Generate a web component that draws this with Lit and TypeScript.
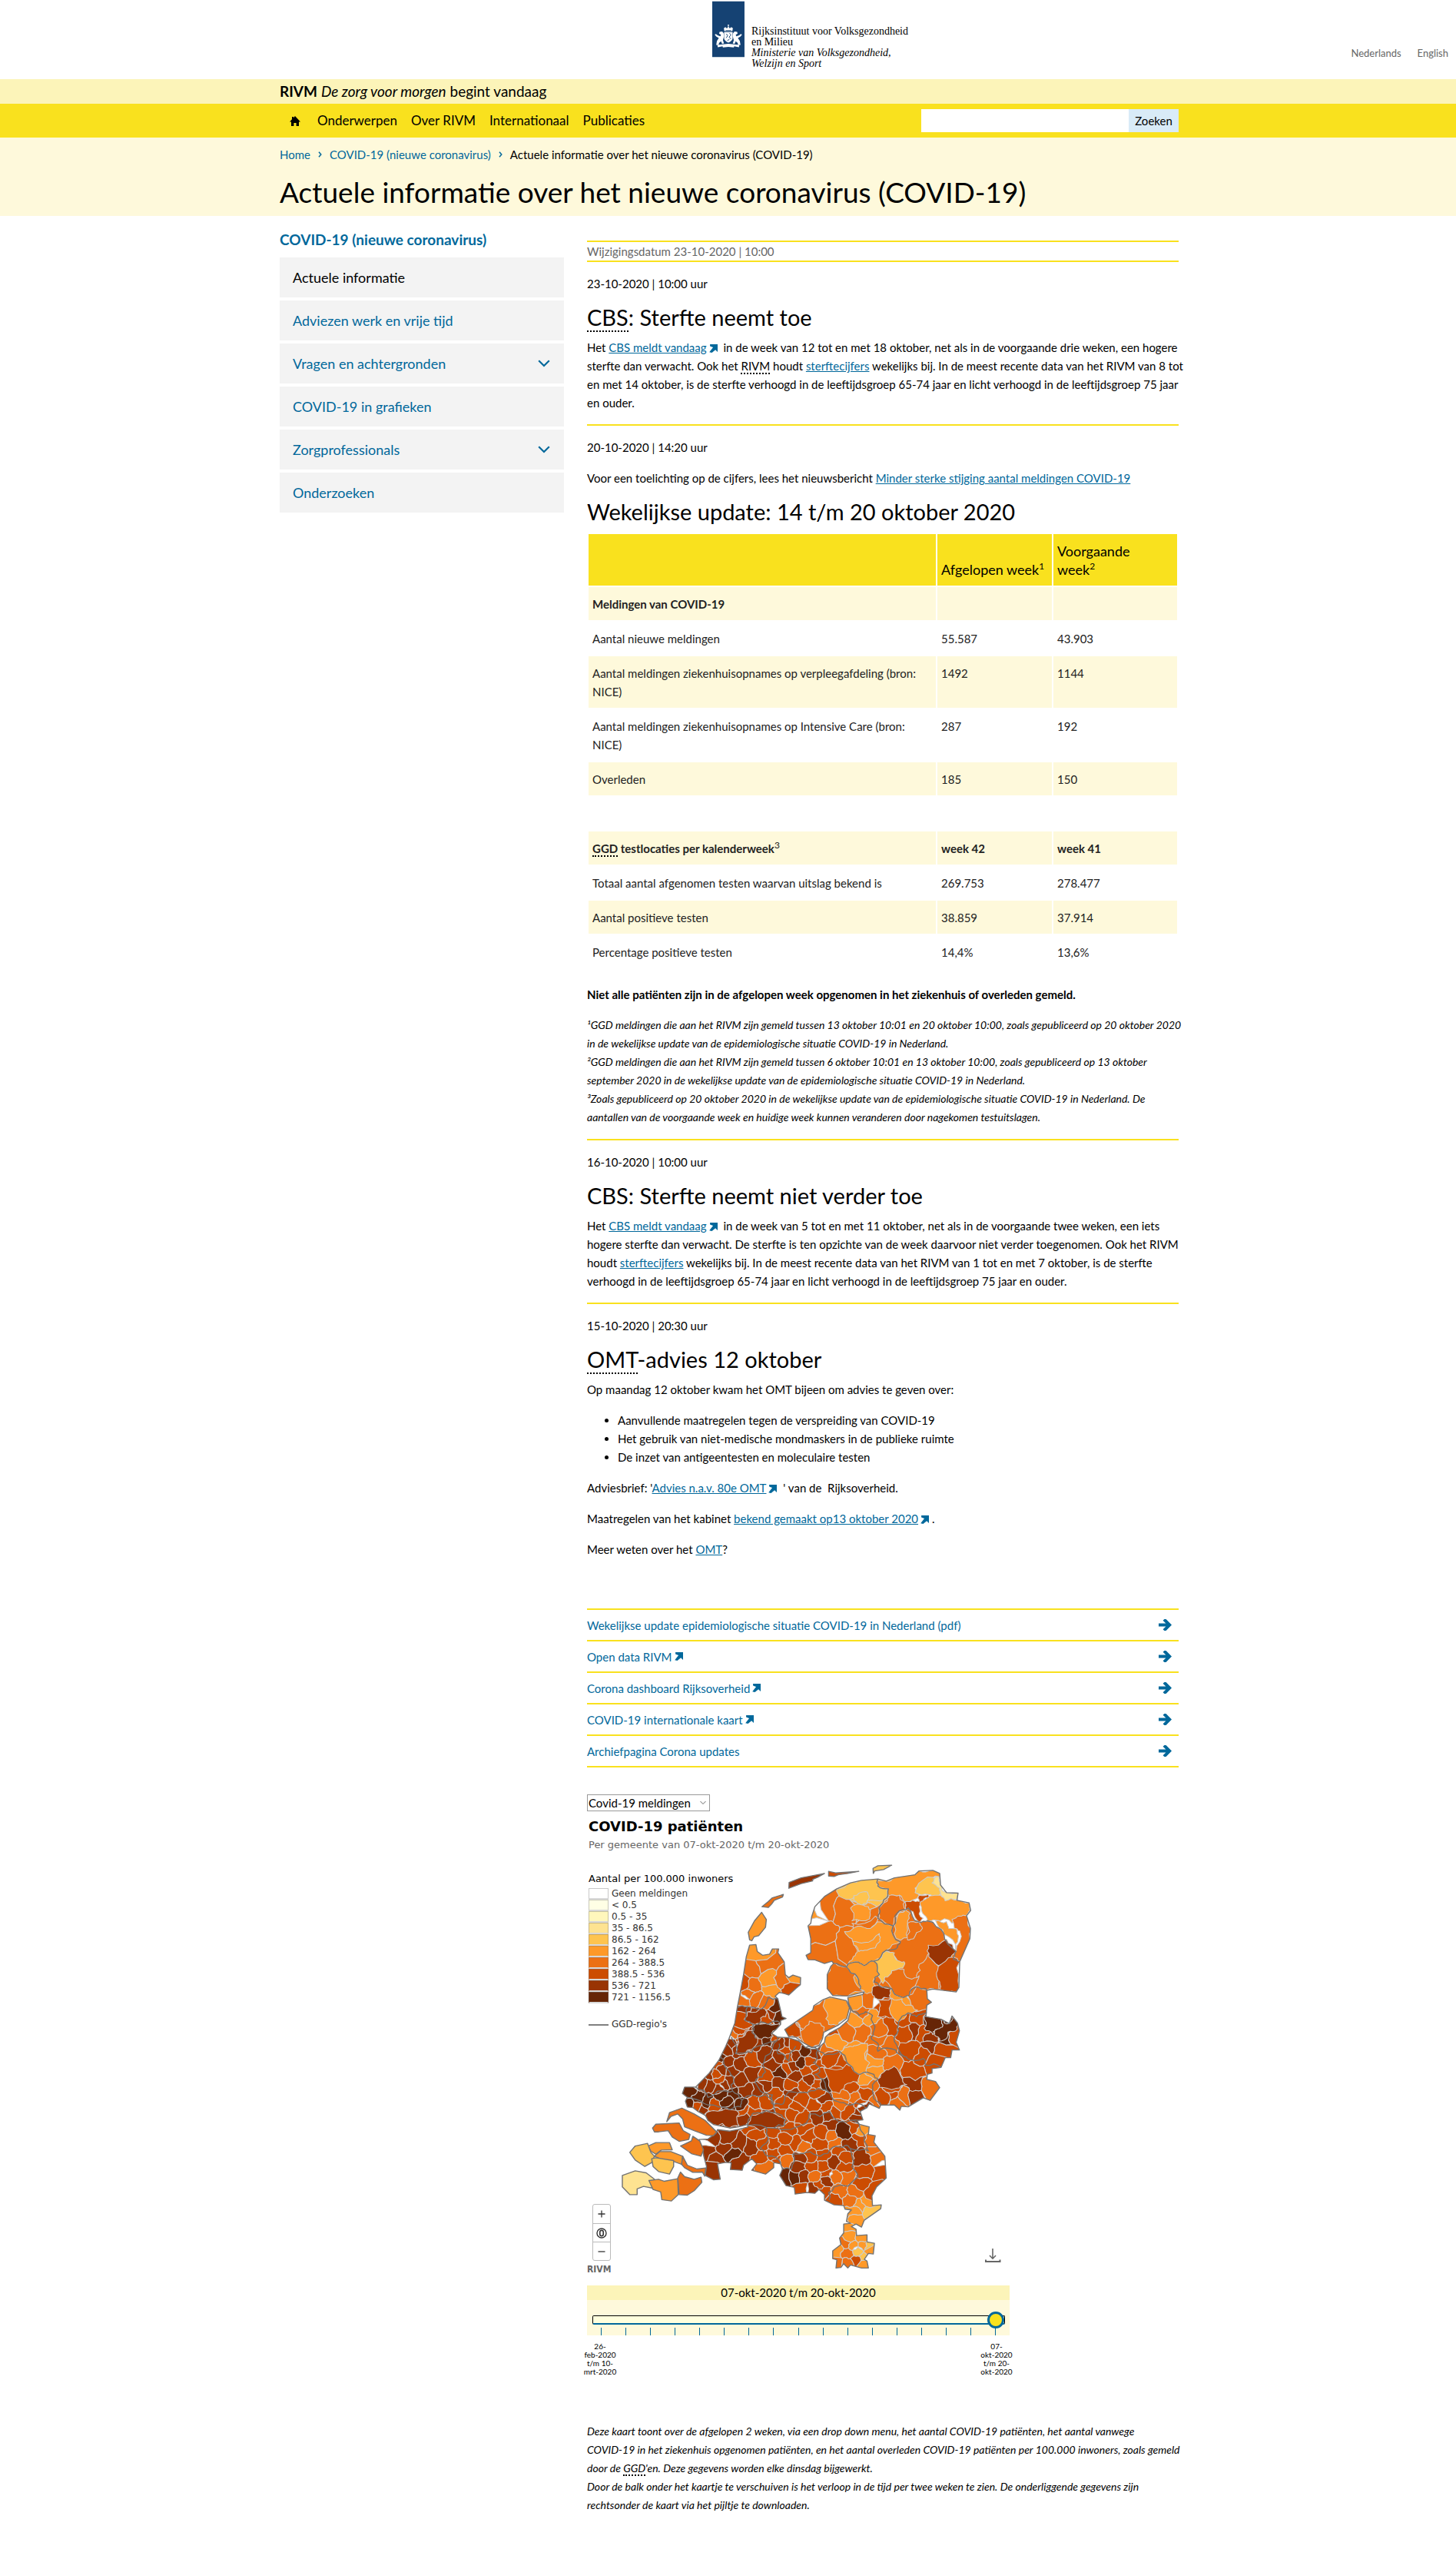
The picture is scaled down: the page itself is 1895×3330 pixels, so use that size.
import { LitElement, html, svg, css } from "lit";
import { customElement, state } from "lit/decorators.js";

type Pt = [number, number];

/* ---------- choropleth data ---------- */

const CLASS_COLORS: Record<string, string> = {
  z: "#ffffff",
  a: "#ffffe5",
  b: "#fff7bc",
  c: "#fee391",
  d: "#fec44f",
  e: "#fe9929",
  f: "#ec7014",
  g: "#cc4c02",
  h: "#993404",
  i: "#662506",
};

const LEGEND: [string, string][] = [
  ["z", "Geen meldingen"],
  ["a", "< 0.5"],
  ["b", "0.5 - 35"],
  ["c", "35 - 86.5"],
  ["d", "86.5 - 162"],
  ["e", "162 - 264"],
  ["f", "264 - 388.5"],
  ["g", "388.5 - 536"],
  ["h", "536 - 721"],
  ["i", "721 - 1156.5"],
];

const MAINLAND =
  "1100,367 1040,372 1000,382 950,405 905,435 870,475 858,515 855,540 845,550 850,575 855,600 855,655 838,665 845,682 870,683 905,697 932,688 938,697 928,708 915,740 915,795 935,822 990,824 1050,808 1045,818 990,830 992,845 1000,880 990,920 960,948 925,968 908,985 905,1005 880,1030 858,1032 835,1025 812,1000 770,986 735,985 712,970 728,955 745,935 745,920 765,912 750,905 745,880 735,835 725,825 740,810 760,815 775,820 800,795 817,780 818,752 790,742 775,752 762,740 758,690 735,655 738,640 715,640 705,660 680,665 660,650 655,623 632,625 620,670 610,740 598,810 587,870 578,930 557,990 545,1020 520,1075 485,1125 435,1180 395,1180 387,1205 405,1220 398,1235 405,1258 425,1260 445,1276 470,1290 480,1310 500,1326 560,1340 592,1335 625,1326 625,1336 592,1345 560,1352 515,1346 510,1360 480,1383 448,1385 460,1420 465,1450 475,1490 470,1525 500,1542 525,1540 515,1480 545,1474 565,1476 562,1502 605,1505 610,1485 640,1460 658,1480 640,1505 690,1520 720,1495 720,1475 745,1480 752,1500 742,1525 765,1565 795,1572 798,1598 840,1592 870,1595 885,1580 905,1600 905,1622 940,1640 975,1643 980,1657 1003,1660 990,1675 985,1705 1000,1712 975,1715 975,1750 960,1770 965,1795 935,1820 935,1850 950,1855 947,1887 965,1885 975,1870 990,1887 1000,1875 1040,1887 1065,1887 1060,1860 1050,1853 1065,1830 1083,1832 1087,1790 1060,1785 1060,1757 1022,1760 1020,1735 1003,1725 1020,1715 1040,1727 1050,1700 1110,1655 1112,1640 1080,1643 1078,1605 1095,1570 1130,1535 1125,1450 1085,1395 1090,1370 1065,1365 1068,1335 1030,1325 1025,1310 1045,1308 1035,1275 1060,1260 1068,1245 1105,1263 1110,1250 1160,1250 1180,1270 1185,1255 1210,1257 1265,1222 1290,1232 1325,1182 1310,1158 1278,1150 1280,1130 1297,1125 1297,1108 1330,1103 1345,1065 1365,1065 1370,1035 1397,1035 1385,1005 1397,960 1390,930 1370,902 1360,932 1330,915 1275,905 1278,860 1295,848 1280,835 1278,802 1300,797 1385,808 1395,790 1398,690 1435,600 1437,560 1423,510 1438,490 1432,460 1388,450 1392,422 1350,420 1328,390 1325,345 1300,333 1250,335 1235,350 1160,362 1130,375";

const FLEVOLAND =
  "925,828 985,842 996,870 986,912 955,938 902,966 898,990 886,1018 860,1026 830,1008 800,985 775,983 760,955 800,925 862,880 866,862 900,838";

/* Centres of the municipalities, grouped by class. */
const CENTRES: Record<string, string> = {
  d: "1040,440 1075,1665 1025,1820 1065,1805 1050,1845",
  e: "640,650 705,765 710,800 805,765 868,500 1030,480 1020,850 1185,870 1070,910 1020,920 1020,1050 1085,1080 1090,1120 940,1000 1055,1150 1045,1350 1060,1620 1030,1640 1010,1670 1020,1705 990,1730 1040,1770 1010,1800 955,1820 1045,1800 1070,1820 1045,1875 1000,1770",
  f: "690,700 635,720 640,790 755,765 610,840 655,835 690,850 630,815 572,970 920,470 900,590 920,650 985,490 1080,540 990,620 1060,840 1240,840 1040,890 985,955 1040,960 1100,950 1100,1000 1100,1040 1130,1020 910,1030 1150,1090 1065,1170 1290,1190 1195,1215 970,1210 1020,1220 1090,1240 1170,1240 965,1250 825,1415 930,1370 945,1400 765,1465 690,1490 1070,1380 1090,1420 870,1530 945,1530 980,1530 1105,1460 960,1590 1020,1590 1000,1625 985,1790 990,1830 960,1875 990,1870",
  g: "608,780 780,795 605,920 695,910 595,955 605,990 1120,870 1150,940 1195,920 1245,915 1380,970 1200,960 1265,965 1220,1040 1330,1030 1260,1060 1300,1085 930,960 930,1070 970,1090 960,1120 1230,1110 1150,1205 1120,1220 1050,1210 1000,1180 1040,1240 1150,1190 990,1270 910,1260 940,1280 720,990 800,1020 760,1040 775,1065 770,1110 850,1080 870,1100 840,1115 830,1170 785,1170 720,1210 690,1145 880,1165 880,1130 515,1090 510,1130 640,1070 520,1150 440,1255 650,1240 690,1230 610,1265 640,1275 500,1250 760,1240 820,1230 880,1200 790,1280 830,1300 750,1290 800,1260 870,1250 650,1340 660,1370 680,1400 675,1450 720,1350 770,1350 830,1340 720,1400 760,1380 760,1430 800,1400 720,1440 850,1370 890,1400 900,1360 1010,1330 740,1470 965,1430 1040,1380 850,1450 900,1450 860,1490 900,1490 910,1520 830,1580 885,1560 900,1590 1050,1510 980,1450 970,1490 1110,1520 1040,1560 940,1620 1075,1590 1020,1860",
  h: "660,900 600,870 715,900 630,985 1230,955 1300,990 1300,1015 1140,1150 1235,1170 1235,1215 1050,1255 1030,1290 900,1225 610,1010 560,1010 590,1040 650,1010 690,1050 740,1010 770,1000 745,1060 860,1050 800,1060 790,1100 720,1090 850,1150 800,1140 690,1170 740,1165 870,1020 545,1040 485,1130 530,1110 550,1080 600,1090 570,1120 640,1130 600,1150 620,1190 660,1190 460,1165 490,1170 540,1170 560,1160 520,1185 455,1265 540,1290 490,1300 620,1300 700,1300 880,1290 920,1290 790,1200 1025,1300 490,1390 550,1375 590,1400 640,1410 480,1425 500,1460 540,1420 600,1470 495,1515 930,1330 990,1410 815,1460 810,1490 830,1530 865,1575 940,1475 910,1545 1040,1455",
  i: "728,870 690,960 740,900 1295,925 1345,950 1340,985 700,990 835,1040 820,1082 745,1120 905,1165 530,1065 410,1200 440,1225 480,1240 530,1210 550,1235 575,1210 410,1245 560,1255 600,1250 570,1445 970,1355 765,1530 795,1530",
};

/* Larger municipalities with their own outline: class, points. */
const AREAS: [string, string][] = [
  ["d", "950,407 1000,382 1040,372 1100,367 1100,395 1138,405 1125,445 1060,450 1058,465 1030,468 1012,440 960,435"],
  ["d", "1012,432 1035,420 1062,418 1066,430 1060,462 1040,468 1025,462"],
  ["e", "1000,480 1040,468 1065,475 1072,505 1070,522 1005,530 1012,500"],
  ["f", "1005,540 1090,512 1100,525 1085,548 1060,560 1010,558"],
  ["e", "978,572 1015,556 1060,560 1098,534 1155,550 1165,580 1182,612 1165,640 1130,645 1085,688 1050,705 1030,692 985,710 1010,670 1025,645 1005,600"],
  ["e", "1010,610 1050,615 1105,580 1108,610 1060,645 1030,650 1012,625"],
  ["e", "1098,372 1130,375 1160,362 1235,350 1250,335 1300,333 1325,345 1325,358 1270,378 1235,402 1238,422 1250,430 1198,455 1178,430 1140,432 1138,405 1104,398"],
  ["d", "1300,360 1240,400 1235,420 1285,428 1310,435 1328,425 1328,395"],
  ["c", "1310,358 1325,360 1328,390 1350,420 1392,422 1388,446 1345,452 1330,430 1325,402 1297,382"],
  ["e", "1252,452 1328,430 1345,452 1388,450 1432,460 1436,490 1423,510 1400,512 1370,540 1310,528 1280,530 1262,500"],
  ["g", "1252,430 1282,427 1284,440 1256,455 1252,480 1265,520 1250,535 1228,495 1200,482 1198,458 1225,450 1250,455"],
  ["f", "1140,432 1178,430 1196,458 1200,484 1178,495 1155,550 1102,522 1103,480 1132,455"],
  ["f", "1155,550 1175,500 1210,480 1250,535 1280,530 1340,580 1385,650 1398,690 1300,797 1240,785 1215,820 1170,822 1150,795 1105,782 1115,760 1130,745 1195,700 1130,645 1182,612"],
  ["e", "1160,548 1175,500 1200,484 1216,500 1208,540 1208,595 1182,606"],
  ["f", "1208,540 1250,535 1262,560 1230,600 1208,605"],
  ["f", "1250,700 1290,650 1320,708 1322,797 1280,800 1235,785 1240,745"],
  ["f", "1120,760 1150,725 1195,720 1215,755 1250,745 1235,785 1215,820 1170,822 1150,795"],
  ["f", "1423,510 1437,560 1435,600 1398,690 1378,672 1385,650 1398,570 1378,558 1370,525 1400,512"],
  ["e", "1310,530 1350,533 1358,560 1385,560 1392,600 1382,645 1340,582"],
  ["h", "1283,625 1350,602 1385,650 1320,705 1285,670"],
  ["g", "1320,708 1375,672 1398,690 1395,790 1385,808 1325,797 1318,760"],
  ["d", "1085,688 1130,648 1160,655 1165,680 1195,690 1190,715 1150,725 1125,750 1118,775 1100,745"],
  ["f", "930,705 945,697 985,710 1020,735 1035,795 1050,808 990,824 935,822 915,795 915,740"],
  ["e", "985,710 1030,692 1050,705 1085,688 1105,740 1085,775 1088,795 1060,815 1035,800 1025,750"],
  ["h", "1085,785 1105,782 1150,795 1145,832 1100,838 1080,820"],
  ["g", "1098,838 1150,832 1155,910 1098,905 1105,870"],
  ["e", "1150,832 1188,835 1200,860 1245,880 1205,892 1175,925 1156,910"],
  ["i", "1268,905 1330,915 1335,945 1310,955 1300,975 1268,950"],
  ["i", "1330,915 1360,932 1370,902 1392,935 1388,955 1355,965 1350,990 1325,1000 1305,975 1312,955 1335,945"],
  ["e", "1018,1018 1062,1010 1070,1085 1060,1125 1035,1130 1010,1115 985,1080 960,1045 1000,1020"],
  ["g", "902,1105 985,1090 1010,1115 1035,1130 1030,1160 990,1165 960,1205 920,1175"],
  ["h", "1098,1150 1130,1112 1158,1098 1190,1150 1205,1170 1165,1185 1105,1180"],
  ["h", "470,1290 500,1272 560,1268 594,1285 594,1332 560,1340 500,1326"],
  ["h", "625,1330 640,1290 690,1275 740,1295 762,1305 755,1335 720,1338"],
  ["h", "585,1050 588,990 605,985 625,960 650,962 662,990 625,1035 605,1052"],
  ["i", "640,950 650,938 700,935 745,928 740,945 712,970 718,982 690,985 665,990"],
  ["h", "612,915 625,885 680,868 695,885 690,905 672,910 670,935 650,935"],
];

const FLEVO_AREAS: [string, string][] = [
  ["f", FLEVOLAND],
  ["e", "908,833 985,842 996,870 986,912 955,938 920,935 915,890"],
  ["g", "760,955 798,923 832,962 818,982 800,985 775,983"],
  ["f", "798,923 820,960 850,922 890,930 905,966 898,990 860,1026 830,1008"],
];

/* Wadden islands and the Zeeland delta. */
const ISLANDS: [string, string][] = [
  ["e", "632,605 627,575 650,530 676,497 693,525 690,555 665,588 648,593 640,608"],
  ["f", "677,475 700,455 715,440 755,427 752,437 722,450 712,465 700,478"],
  ["h", "775,403 776,380 820,362 905,345 880,360 862,368 862,374 820,385"],
  ["g", "920,337 945,343 1030,337 990,345 955,350 940,357 920,355"],
  ["d", "1083,345 1082,325 1100,315 1150,313 1120,330 1088,335"],
  ["f", "340,1280 385,1262 430,1285 470,1310 512,1355 500,1370 475,1368 430,1350 395,1335 388,1305 370,1285 345,1295 330,1315"],
  ["f", "278,1340 290,1325 375,1320 390,1350 415,1365 410,1385 375,1392 350,1375 335,1350 300,1355 285,1355"],
  ["f", "380,1410 420,1390 425,1372 450,1390 464,1425 455,1450 420,1440"],
  ["e", "262,1410 290,1397 340,1397 350,1425 310,1426 290,1442 272,1430"],
  ["d", "195,1435 215,1410 260,1400 272,1435 285,1450 275,1475 250,1490 215,1465"],
  ["e", "285,1450 305,1432 345,1432 388,1450 384,1482 355,1470 318,1465"],
  ["d", "275,1460 290,1456 355,1467 355,1490 340,1520 300,1510 280,1490"],
  ["f", "388,1450 405,1485 440,1500 472,1496 468,1528 460,1512 425,1513 395,1495 384,1482"],
  ["c", "168,1525 215,1507 255,1515 285,1540 280,1575 245,1568 222,1578 222,1600 195,1600 168,1570"],
  ["e", "265,1545 300,1540 320,1548 370,1538 372,1600 347,1625 312,1620 308,1590 280,1580"],
  ["f", "370,1535 380,1512 395,1530 430,1540 455,1532 458,1552 430,1585 405,1602 375,1600"],
];

/* Borders of the GGD regions. */
const REGIONS: string[] = [
  "1100,367 1100,395 1138,405 1132,440 1103,480 1100,520 1155,550 1170,500 1210,480 1250,535 1280,530 1340,580 1385,650 1375,680 1398,690",
  "1155,550 1182,612 1165,640 1130,645 1085,688 1050,705 1030,692 985,710 938,697",
  "1085,688 1105,740 1085,770 1105,785 1150,795 1170,822 1215,820 1240,788 1275,795 1280,805",
  "985,710 1025,750 1035,800",
  "992,845 1005,880 1030,900 1055,885 1080,900 1085,960 1075,985 1100,1010 1100,1040 1165,1035 1195,1060 1210,1070 1265,1068 1275,1095 1330,1103",
  "1278,890 1240,905 1210,890 1175,925 1175,960 1160,985 1165,1010 1195,1060",
  "880,1030 905,1055 960,1040 985,1080 1010,1115 1035,1130 1085,1130 1100,1150 1080,1200 1090,1230 1110,1252",
  "835,1025 880,1035 865,1085 885,1100 888,1120 870,1130 900,1150 925,1205 880,1185 830,1200 775,1198 755,1245 720,1250 715,1210 695,1205 660,1175 655,1150 690,1120 685,1080 720,1010 735,985",
  "925,1205 950,1235 1000,1250 1040,1248 1060,1260",
  "565,985 580,1050 640,1045 690,1010 725,1000",
  "525,1062 550,1110 575,1150 570,1195 605,1230 690,1210 720,1250 725,1280",
  "435,1180 480,1220 530,1195 570,1195",
  "605,1230 600,1258 560,1268 480,1250 425,1225 405,1220",
  "725,1280 660,1280 640,1290 625,1326",
  "625,1330 720,1340 760,1330 765,1310 725,1280",
  "720,1340 840,1320 850,1285 925,1277 975,1315 1010,1310 1025,1310",
  "690,1335 695,1365 670,1420 700,1450 745,1475 742,1480",
  "785,1500 790,1440 840,1435 890,1450 935,1415 980,1408 1000,1420 1065,1430 1050,1390 1010,1310",
  "1000,1420 1005,1490 1027,1530 940,1570 922,1622",
  "785,1500 750,1500",
  "587,870 625,865 660,875 700,830 735,835",
  "625,865 615,920 645,935 700,935 745,930",
  "645,935 640,965 655,990",
  "740,1010 735,1050 775,1078 800,1020",
];

/* ---------- geometry ---------- */

const parse = (s: string): Pt[] => s.split(" ").map((p) => p.split(",").map(Number) as Pt);

/** Repeatable pseudo-random value between -0.5 and 0.5 for an edge. */
const noise = (a: Pt, b: Pt, salt: number) => {
  const v = Math.sin((a[0] + b[0]) * 12.9898 + (a[1] + b[1]) * 78.233 + salt) * 43758.5453;
  return v - Math.floor(v) - 0.5;
};

/** Bends a straight border; both neighbours get the same bend. */
function bend(a: Pt, b: Pt, depth: number): Pt[] {
  const len = Math.hypot(b[0] - a[0], b[1] - a[1]);
  if (depth === 0 || len < 9) return [a];
  const flip = a[0] > b[0] || (a[0] === b[0] && a[1] > b[1]) ? -1 : 1;
  const n = noise(a, b, depth) * 0.42 * flip;
  const mid: Pt = [
    Math.round((a[0] + b[0]) / 2 - (b[1] - a[1]) * n),
    Math.round((a[1] + b[1]) / 2 + (b[0] - a[0]) * n),
  ];
  return [...bend(a, mid, depth - 1), ...bend(mid, b, depth - 1)];
}

const roughen = (pts: Pt[], depth: number) =>
  pts.flatMap((p, i) => bend(p, pts[(i + 1) % pts.length], depth));

const join = (pts: Pt[]) => pts.map((p) => p.join(",")).join(" ");

/** Cell of points that lie nearer to centre i than to any other centre. */
function cell(i: number, centres: Pt[]): Pt[] {
  const [cx, cy] = centres[i];
  let poly: Pt[] = [[cx - 120, cy - 120], [cx + 120, cy - 120], [cx + 120, cy + 120], [cx - 120, cy + 120]];
  centres.forEach(([ox, oy], j) => {
    if (j === i) return;
    const dx = ox - cx;
    const dy = oy - cy;
    const limit = (ox * ox + oy * oy - cx * cx - cy * cy) / 2;
    const side = (p: Pt) => p[0] * dx + p[1] * dy - limit;
    const next: Pt[] = [];
    poly.forEach((p, k) => {
      const q = poly[(k + 1) % poly.length];
      const sp = side(p);
      const sq = side(q);
      if (sp <= 0) next.push(p);
      if (sp < 0 !== sq < 0 && sp !== sq) {
        const t = sp / (sp - sq);
        next.push([p[0] + (q[0] - p[0]) * t, p[1] + (q[1] - p[1]) * t]);
      }
    });
    poly = next;
  });
  return poly.map(([x, y]) => [Math.round(x), Math.round(y)] as Pt);
}

const SEEDS = Object.entries(CENTRES).flatMap(([k, s]) => parse(s).map((p) => ({ k, p })));
const POINTS = SEEDS.map((s) => s.p);
const CELLS = SEEDS.map((s, i) => ({ k: s.k, points: join(roughen(cell(i, POINTS), 2)) }));

/* ---------- page data ---------- */

const MENU: { label: string; current?: boolean; sub?: boolean }[] = [
  { label: "Actuele informatie", current: true },
  { label: "Adviezen werk en vrije tijd" },
  { label: "Vragen en achtergronden", sub: true },
  { label: "COVID-19 in grafieken" },
  { label: "Zorgprofessionals", sub: true },
  { label: "Onderzoeken" },
];

const LINKS: [string, boolean][] = [
  ["Wekelijkse update epidemiologische situatie COVID-19 in Nederland (pdf)", false],
  ["Open data RIVM", true],
  ["Corona dashboard Rijksoverheid", true],
  ["COVID-19 internationale kaart", true],
  ["Archiefpagina Corona updates", false],
];

const external = html`<svg class="ext" viewBox="0 0 10 10" aria-hidden="true">
  <path d="M1 0H10V9L7.4 6.6 3.2 10 0.2 9.4 4.6 3.6 1 2.2Z" fill="#01689b" />
</svg>`;

@customElement("rivm-map")
export class RivmMap extends LitElement {
  @state() private period = 16;

  static styles = css`
    :host {
      display: block;
      color: #000;
      font: 15px/24px Lato, "Open Sans", sans-serif;
    }
    .choice {
      display: block;
      width: 160px;
      height: 22px;
      padding: 0 0 0 1px;
      border: 1px solid #999;
      border-radius: 0;
      background: #fff;
      color: #000;
      font: 15px/20px Lato, "Open Sans", sans-serif;
      appearance: none;
    }
    .pick {
      display: grid;
      width: 160px;
    }
    .pick > * {
      grid-area: 1 / 1;
    }
    .pick svg {
      width: 8px;
      height: 6px;
      align-self: center;
      justify-self: end;
      margin-right: 5px;
      pointer-events: none;
    }
    .canvas {
      position: relative;
      max-width: 560px;
      font-family: "DejaVu Sans", sans-serif;
    }
    .chart {
      display: block;
      width: 100%;
    }
    .over {
      position: absolute;
      left: 2px;
      top: 0;
    }
    h3 {
      margin: 8px 0 0;
      font-size: 18px;
      line-height: 24px;
      font-weight: 700;
    }
    .sub {
      margin: 0 0 20px;
      color: #666;
      font-size: 13px;
      line-height: 24px;
    }
    .legend-title {
      margin: 0;
      font-size: 13px;
      line-height: 24px;
    }
    ul {
      margin: 0;
      padding: 0;
      list-style: none;
    }
    li {
      display: flex;
      align-items: center;
      gap: 4px;
      height: 15px;
      color: #333;
      font-size: 12px;
      line-height: 15px;
    }
    .key {
      box-sizing: border-box;
      width: 26px;
      height: 15px;
      border: 1px solid rgba(120, 120, 120, 0.4);
      border-bottom: 2px solid #d8d8d8;
    }
    .line {
      width: 26px;
      height: 2px;
      background: #808080;
    }
    .region {
      margin-top: 20px;
    }
    .zoom {
      position: absolute;
      left: 7px;
      top: 511px;
      display: flex;
      flex-direction: column;
      width: 22px;
      border: 1px solid #bbb;
      border-radius: 3px;
      background: #fff;
    }
    .zoom button {
      display: grid;
      place-items: center;
      height: 24px;
      padding: 0;
      border: 0;
      background: none;
      color: #222;
    }
    .zoom button + button {
      border-top: 1px solid #bbb;
    }
    .zoom svg {
      width: 14px;
      height: 14px;
    }
    .credit {
      position: absolute;
      left: 0;
      top: 588px;
      color: #666;
      font: bold 12px/16px "DejaVu Sans Condensed", "DejaVu Sans", sans-serif;
    }
    .save {
      position: absolute;
      left: 517px;
      top: 567px;
      width: 22px;
      height: 22px;
      padding: 0;
      border: 0;
      background: none;
    }
    .save svg {
      display: block;
      width: 22px;
      height: 22px;
    }
    .player {
      max-width: 550px;
    }
    .period {
      display: block;
      height: 19px;
      background: #fcf4b9;
      line-height: 19px;
      text-align: center;
    }
    .rail {
      display: flex;
      flex-direction: column;
      height: 46px;
      padding: 16px 6px 0 7px;
      box-sizing: border-box;
      background: #fef9db;
    }
    input {
      appearance: none;
      display: block;
      width: 100%;
      height: 22px;
      margin: 0;
      background: none;
    }
    input::-webkit-slider-runnable-track {
      box-sizing: border-box;
      height: 12px;
      border: 1px solid #000;
      border-bottom: 2px solid #01689b;
      border-radius: 2px;
      background: #ffffdd;
    }
    input::-webkit-slider-thumb {
      appearance: none;
      box-sizing: border-box;
      width: 22px;
      height: 22px;
      margin-top: -6px;
      border: 3px solid #01689b;
      border-radius: 50%;
      background: #f9e11e;
    }
    .ticks {
      display: flex;
      justify-content: space-between;
      padding: 0 12px 0 11px;
    }
    .ticks i {
      width: 1px;
      height: 10px;
      background: #01689b;
    }
    .ends {
      display: flex;
      justify-content: space-between;
      margin: 9px -6px 0;
      font-size: 10px;
      line-height: 11px;
      text-align: center;
    }
    .ends span {
      width: 46px;
    }
  `;

  private area([k, points]: [string, string]) {
    return svg`<polygon points=${join(roughen(parse(points), 2))} fill=${CLASS_COLORS[k]} />`;
  }

  render() {
    return html`
      <div class="pick">
        <select class="choice" aria-label="Kies een kaart">
          <option>Covid-19 meldingen</option>
        </select>
        <svg viewBox="0 0 8 6" aria-hidden="true">
          <path d="M0.5 1 4 4.5 7.5 1" fill="none" stroke="#666" />
        </svg>
      </div>
      <div class="canvas">
        <svg class="chart" viewBox="14 34 560 617" role="img" aria-label="COVID-19 patiënten per gemeente">
          <defs>
            <clipPath id="land">
              <polygon points=${MAINLAND} transform="scale(.357 .333)" />
            </clipPath>
            <clipPath id="flevo">
              <polygon points=${FLEVOLAND} transform="scale(.357 .333)" />
            </clipPath>
          </defs>
          <g clip-path="url(#land)">
            <g transform="scale(.357 .333)" stroke="#ccc" stroke-width="3" stroke-linejoin="round">
              ${CELLS.map((c) => svg`<polygon points=${c.points} fill=${CLASS_COLORS[c.k]} />`)}
              ${AREAS.map((a) => this.area(a))}
            </g>
          </g>
          <g clip-path="url(#flevo)">
            <g transform="scale(.357 .333)" stroke="#ccc" stroke-width="3">
              ${FLEVO_AREAS.map((a) => this.area(a))}
            </g>
          </g>
          <g transform="scale(.357 .333)" fill="none" stroke="#737373" stroke-width="4" stroke-linejoin="round">
            <polygon points=${MAINLAND} />
            <polygon points=${FLEVOLAND} />
            ${REGIONS.map((r) => {
              const p = parse(r);
              const line = p.flatMap((a, i) => (i + 1 < p.length ? bend(a, p[i + 1], 2) : [a]));
              return svg`<polyline points=${join(line)} />`;
            })}
            ${ISLANDS.map(([k, p]) => svg`<polygon points=${p} fill=${CLASS_COLORS[k]} />`)}
          </g>
        </svg>
        <div class="over">
          <h3>COVID-19 patiënten</h3>
          <p class="sub">Per gemeente van 07-okt-2020 t/m 20-okt-2020</p>
          <p class="legend-title">Aantal per 100.000 inwoners</p>
          <ul>
            ${LEGEND.map(
              ([k, label]) => html`<li><span class="key" style="background-color:${CLASS_COLORS[k]}"></span>${label}</li>`,
            )}
            <li class="region"><span class="line"></span>GGD-regio's</li>
          </ul>
        </div>
        <div class="zoom">
          <button aria-label="Inzoomen">
            <svg viewBox="0 0 14 14"><path d="M7 2.5V11.5M2.5 7H11.5" stroke="#333" stroke-width="1.3" /></svg>
          </button>
          <button aria-label="Hele kaart">
            <svg viewBox="0 0 14 14" fill="none" stroke="#333">
              <circle cx="7" cy="7" r="6" stroke-width="1.4" />
              <rect x="4.8" y="3.4" width="4.4" height="7.2" rx="2.2" stroke-width="1.6" />
            </svg>
          </button>
          <button aria-label="Uitzoomen">
            <svg viewBox="0 0 14 14"><path d="M2.5 7H11.5" stroke="#333" stroke-width="1.3" /></svg>
          </button>
        </div>
        <div class="credit">RIVM</div>
        <button class="save" aria-label="Downloaden">
          <svg viewBox="0 0 22 22" fill="none" stroke="#666" stroke-width="1.6">
            <path d="M11 2V15M7 11 11 15.2 15 11" />
            <path d="M2 16.5V19H20.5V16.5" stroke-width="2" />
          </svg>
        </button>
      </div>
      <div class="player">
        <label class="period" for="period">07-okt-2020 t/m 20-okt-2020</label>
        <div class="rail">
          <input
            id="period"
            type="range"
            min="0"
            max="16"
            .value=${String(this.period)}
            @input=${(e: Event) => (this.period = Number((e.target as HTMLInputElement).value))}
          />
          <div class="ticks">${Array.from({ length: 17 }, () => html`<i></i>`)}</div>
        </div>
        <div class="ends">
          <span>26-<br />feb-2020<br />t/m 10-<br />mrt-2020</span>
          <span>07-<br />okt-2020<br />t/m 20-<br />okt-2020</span>
        </div>
      </div>
    `;
  }
}

@customElement("app-root")
export class AppRoot extends LitElement {
  static styles = css`
    :host {
      display: block;
      background: #fff;
      color: #000;
      font: 15px/24px Lato, "Open Sans", sans-serif;
    }
    a {
      color: #01689b;
    }
    .wrap {
      box-sizing: border-box;
      max-width: 1173px;
      margin: 0 auto;
      padding-left: 3px;
    }
    .top {
      display: grid;
      grid-template-columns: 1fr auto 1fr;
      height: 103px;
    }
    .brand {
      grid-column: 2;
      display: flex;
      gap: 9px;
      width: 255px;
      margin-left: 214px;
      color: #000;
      text-decoration: none;
    }
    .ribbon {
      width: 44px;
      height: 76px;
    }
    .name {
      margin-top: 34px;
      font: 14px/14px "Liberation Serif", serif;
      white-space: nowrap;
    }
    .langs {
      display: flex;
      justify-content: flex-end;
      gap: 21px;
      padding: 57px 10px 0 0;
      font-size: 13px;
    }
    .langs a {
      color: #666;
      text-decoration: none;
    }
    .payoff {
      background: #fcf4b9;
      font-size: 19px;
      line-height: 32px;
    }
    .bar {
      background: #f9e11e;
    }
    .bar .wrap {
      display: flex;
      align-items: center;
      justify-content: space-between;
      height: 44px;
    }
    nav {
      display: flex;
      align-items: center;
      gap: 18px;
      padding-left: 13px;
    }
    nav a {
      color: #000;
      font-size: 17px;
      text-decoration: none;
    }
    .home {
      display: block;
      width: 14px;
      height: 13px;
      margin-right: 4px;
    }
    form {
      display: flex;
    }
    .search {
      box-sizing: border-box;
      width: 270px;
      height: 30px;
      border: 0;
      background: #fff;
    }
    .go {
      width: 65px;
      height: 30px;
      padding: 0;
      border: 0;
      background: #d9ebf7;
      color: #000;
      font: 15px/30px Lato, "Open Sans", sans-serif;
    }
    .intro {
      background: #fef9db;
    }
    .crumbs {
      display: flex;
      align-items: center;
      gap: 10px;
      padding-top: 10px;
    }
    .crumbs a {
      text-decoration: none;
    }
    .crumbs svg {
      width: 5px;
      height: 8px;
    }
    h1 {
      margin: 0;
      padding: 17px 0 11px;
      font-size: 37px;
      line-height: 40px;
      font-weight: 400;
    }
    .cols {
      display: grid;
      grid-template-columns: 370px minmax(0, 1fr);
      gap: 30px;
    }
    .menu-title {
      display: block;
      margin: 19px 0 11px;
      font-size: 19px;
      font-weight: 700;
      text-decoration: none;
    }
    .menu {
      display: grid;
      gap: 4px;
    }
    .menu a {
      display: flex;
      align-items: center;
      justify-content: space-between;
      height: 52px;
      padding: 0 18px 0 17px;
      background: #f3f3f3;
      font-size: 18px;
      text-decoration: none;
    }
    .menu a.current {
      color: #000;
    }
    .menu svg {
      width: 16px;
      height: 10px;
    }
    p {
      margin: 0 -8px 16px 0;
    }
    .changed {
      margin: 32px 0 16px;
      border: 2px solid #f9e11e;
      border-width: 2px 0;
      color: #666;
    }
    h2 {
      margin: 16px 0 11px;
      font-size: 29px;
      line-height: 32px;
      font-weight: 400;
    }
    hr {
      margin: 16px 0;
      border: 0;
      border-top: 2px solid #f9e11e;
    }
    abbr {
      text-decoration: none;
      border-bottom: 2px dotted #000;
    }
    .ext {
      width: 11px;
      height: 11px;
      margin: 0 4px 0 3px;
      vertical-align: -1px;
    }
    table {
      width: 100%;
      margin-bottom: 20px;
      border-spacing: 2px;
      border-collapse: separate;
      color: #222;
    }
    th,
    td {
      padding: 10px 5px 9px;
      font-weight: 400;
      text-align: left;
      vertical-align: top;
    }
    thead th {
      background: #f9e11e;
      color: #000;
      font-size: 18px;
      vertical-align: bottom;
    }
    .c2 {
      width: 139px;
    }
    .c3 {
      width: 151px;
    }
    tr.odd > * {
      background: #fef9db;
    }
    tr.gap > * {
      height: 24px;
    }
    tr.strong > * {
      font-weight: 700;
    }
    sup {
      font-size: 12px;
      line-height: 0;
      font-weight: 400;
    }
    .note {
      font-size: 14px;
      font-style: italic;
    }
    .bullets {
      margin: 16px 0;
      padding-left: 40px;
    }
    .links {
      margin: 65px 0 35px;
      padding: 0;
      border-top: 2px solid #f9e11e;
      list-style: none;
    }
    .links li {
      border-bottom: 2px solid #f9e11e;
    }
    .links a {
      display: flex;
      align-items: center;
      height: 39px;
      text-decoration: none;
    }
    .links .arrow {
      width: 17px;
      height: 15px;
      margin: 0 9px 0 auto;
    }
    .foot {
      margin: 60px -8px 62px 0;
    }
  `;

  render() {
    return html`
      <header>
        <div class="top">
          <a class="brand" href="#">
            <svg class="ribbon" viewBox="0 0 44 76" aria-hidden="true">
              <rect width="44" height="76" fill="#154273" />
              <g fill="#fff">
                <circle cx="22" cy="32.6" r="1" />
                <path d="M21.6 33h.8v2h-.8z" />
                <path d="M16.6 40.6 15.8 36.8 18 35.2 20 37 22 34.4 24 37 26 35.2 28.2 36.8 27.4 40.6Z" />
                <path d="M18.2 39.4h7.6v1h-7.6z" fill="#154273" />
                <path d="M16.2 42H27.8V50C27.8 53 25 55 22 56.4 19 55 16.2 53 16.2 50Z" />
                <path d="M13.6 41.2 10 41.6 9.4 44 12 45.6 11 47.6 7.4 46.4 5 44.6 3.4 45.4 5.4 48 9 50 6.4 54 5.4 59.4 8.6 59.6 9.4 56.6 12 54.4 13.4 58 16 57.4 14.6 53 16 47.6 15.6 43.4Z" />
                <path d="M30.4 41.2 34 41.6 34.6 44 32 45.6 33 47.6 36.6 46.4 39 44.6 40.6 45.4 38.6 48 35 50 37.6 54 38.6 59.4 35.4 59.6 34.6 56.6 32 54.4 30.6 58 28 57.4 29.4 53 28 47.6 28.4 43.4Z" />
                <path d="M7 59.4 14 58.6 22 58 30 58.6 37 59.4 36.4 62.6 30 61.4 29.4 63 22 62 14.6 63 14 61.4 7.6 62.6Z" />
              </g>
              <path d="M19.4 44.4 21 47 19 50M23.6 43.6 25.6 46 23 48.6 25.4 51.4M20.6 53.4 23.4 52" fill="none" stroke="#154273" stroke-width="1" />
            </svg>
            <span class="name">
              Rijksinstituut voor Volksgezondheid<br />en Milieu<br />
              <i>Ministerie van Volksgezondheid,<br />Welzijn en Sport</i>
            </span>
          </a>
          <div class="langs"><a href="#">Nederlands</a><a href="#">English</a></div>
        </div>
        <div class="payoff"><div class="wrap"><b>RIVM</b> <i>De zorg voor morgen</i> begint vandaag</div></div>
        <div class="bar">
          <div class="wrap">
            <nav aria-label="Hoofdmenu">
              <a href="#" aria-label="Home"
                ><svg class="home" viewBox="0 0 14 13">
                  <path d="M7 0 14 7.4H12V13H8.6V9H5.4V13H2V7.4H0L3 4.2V1H5V2.2Z" /></svg
              ></a>
              <a href="#">Onderwerpen</a>
              <a href="#">Over RIVM</a>
              <a href="#">Internationaal</a>
              <a href="#">Publicaties</a>
            </nav>
            <form role="search" @submit=${(e: Event) => e.preventDefault()}>
              <input class="search" type="text" aria-label="Zoeken" />
              <button class="go">Zoeken</button>
            </form>
          </div>
        </div>
        <div class="intro">
          <div class="wrap">
            <div class="crumbs">
              <a href="#">Home</a>${this.chevron()}<a href="#">COVID-19 (nieuwe coronavirus)</a>${this.chevron()}
              <span>Actuele informatie over het nieuwe coronavirus (COVID-19)</span>
            </div>
            <h1>Actuele informatie over het nieuwe coronavirus (COVID-19)</h1>
          </div>
        </div>
      </header>
      <div class="wrap cols">
        <aside>
          <a class="menu-title" href="#">COVID-19 (nieuwe coronavirus)</a>
          <div class="menu">
            ${MENU.map(
              (m) => html`<a href="#" class=${m.current ? "current" : ""}
                >${m.label}${m.sub
                  ? html`<svg viewBox="0 0 16 10" aria-hidden="true">
                      <path d="M1.2 1.2 8 8 14.8 1.2" fill="none" stroke="#01689b" stroke-width="2.2" />
                    </svg>`
                  : ""}</a
              >`,
            )}
          </div>
        </aside>
        <main>
          <p class="changed">Wijzigingsdatum 23-10-2020 | 10:00</p>
          <p>23-10-2020 | 10:00 uur</p>
          <h2><abbr title="Centraal Bureau voor de Statistiek">CBS</abbr>: Sterfte neemt toe</h2>
          <p>
            Het <a href="#">CBS meldt vandaag</a>${external} in de week van 12 tot en met 18 oktober, net als in de
            voorgaande drie weken, een hogere sterfte dan verwacht. Ook het
            <abbr title="Rijksinstituut voor Volksgezondheid en Milieu">RIVM</abbr> houdt
            <a href="#">sterftecijfers</a> wekelijks bij. In de meest recente data van het RIVM van 8 tot en met 14
            oktober, is de sterfte verhoogd in de leeftijdsgroep 65-74 jaar en licht verhoogd in de leeftijdsgroep 75
            jaar en ouder.
          </p>
          <hr />
          <p>20-10-2020 | 14:20 uur</p>
          <p>
            Voor een toelichting op de cijfers, lees het nieuwsbericht
            <a href="#">Minder sterke stijging aantal meldingen COVID-19</a>
          </p>
          <h2>Wekelijkse update: 14 t/m 20 oktober 2020</h2>
          ${this.table()}
          <p><b>Niet alle patiënten zijn in de afgelopen week opgenomen in het ziekenhuis of overleden gemeld.</b></p>
          <p class="note">
            ¹GGD meldingen die aan het RIVM zijn gemeld tussen 13 oktober 10:01 en 20 oktober 10:00, zoals gepubliceerd
            op 20 oktober 2020 in de wekelijkse update van de epidemiologische situatie COVID-19 in Nederland.<br />
            ²GGD meldingen die aan het RIVM zijn gemeld tussen 6 oktober 10:01 en 13 oktober 10:00, zoals gepubliceerd
            op 13 oktober<br />
            september 2020 in de wekelijkse update van de epidemiologische situatie COVID-19 in Nederland.<br />
            ³Zoals gepubliceerd op 20 oktober 2020 in de wekelijkse update van de epidemiologische situatie COVID-19 in
            Nederland. De<br />
            aantallen van de voorgaande week en huidige week kunnen veranderen door nagekomen testuitslagen.
          </p>
          <hr />
          <p>16-10-2020 | 10:00 uur</p>
          <h2>CBS: Sterfte neemt niet verder toe</h2>
          <p>
            Het <a href="#">CBS meldt vandaag</a>${external} in de week van 5 tot en met 11 oktober, net als in de
            voorgaande twee weken, een iets hogere sterfte dan verwacht. De sterfte is ten opzichte van de week
            daarvoor niet verder toegenomen. Ook het RIVM houdt <a href="#">sterftecijfers</a> wekelijks bij. In de
            meest recente data van het RIVM van 1 tot en met 7 oktober, is de sterfte verhoogd in de leeftijdsgroep
            65-74 jaar en licht verhoogd in de leeftijdsgroep 75 jaar en ouder.
          </p>
          <hr />
          <p>15-10-2020 | 20:30 uur</p>
          <h2><abbr title="Outbreak Management Team">OMT</abbr>-advies 12 oktober</h2>
          <p>Op maandag 12 oktober kwam het OMT bijeen om advies te geven over:</p>
          <ul class="bullets">
            <li>Aanvullende maatregelen tegen de verspreiding van COVID-19</li>
            <li>Het gebruik van niet-medische mondmaskers in de publieke ruimte</li>
            <li>De inzet van antigeentesten en moleculaire testen</li>
          </ul>
          <p>Adviesbrief: '<a href="#">Advies n.a.v. 80e OMT</a>${external} ' van de&nbsp; Rijksoverheid.</p>
          <p>Maatregelen van het kabinet <a href="#">bekend gemaakt op13 oktober 2020</a>${external}.</p>
          <p>Meer weten over het <a href="#">OMT</a>?</p>
          <ul class="links">
            ${LINKS.map(
              ([label, ext]) => html`<li>
                <a href="#"
                  >${label}${ext ? external : ""}
                  <svg class="arrow" viewBox="0 0 17 15" aria-hidden="true">
                    <path d="M0 5.6H9.4L5.6 1.8 7.4 0H9.6L17 7.5 9.6 15H7.4L5.6 13.2 9.4 9.4H0Z" fill="#01689b" /></svg
                ></a>
              </li>`,
            )}
          </ul>
          <rivm-map></rivm-map>
          <p class="note foot">
            Deze kaart toont over de afgelopen 2 weken, via een drop down menu, het aantal COVID-19 patiënten, het
            aantal vanwege<br />
            COVID-19 in het ziekenhuis opgenomen patiënten, en het aantal overleden COVID-19 patiënten per 100.000
            inwoners, zoals gemeld door de
            <abbr title="Gemeentelijke Gezondheidsdienst">GGD</abbr>'en. Deze gegevens worden elke dinsdag
            bijgewerkt.<br />
            Door de balk onder het kaartje te verschuiven is het verloop in de tijd per twee weken te zien. De
            onderliggende gegevens zijn<br />
            rechtsonder de kaart via het pijltje te downloaden.
          </p>
        </main>
      </div>
    `;
  }

  private chevron() {
    return html`<svg viewBox="0 0 5 8" aria-hidden="true">
      <path d="M1 0.8 3.8 4 1 7.2" fill="none" stroke="#01689b" stroke-width="1.5" />
    </svg>`;
  }

  private table() {
    const row = (cls: string, a: unknown, b: string, c: string) =>
      html`<tr class=${cls}>
        <td>${a}</td>
        <td>${b}</td>
        <td>${c}</td>
      </tr>`;
    return html`<table>
      <thead>
        <tr>
          <th></th>
          <th class="c2">Afgelopen week<sup>1</sup></th>
          <th class="c3">Voorgaande<br />week<sup>2</sup></th>
        </tr>
      </thead>
      <tbody>
        ${row("odd strong", "Meldingen van COVID-19", "", "")}
        ${row("even", "Aantal nieuwe meldingen", "55.587", "43.903")}
        ${row("odd", "Aantal meldingen ziekenhuisopnames op verpleegafdeling (bron: NICE)", "1492", "1144")}
        ${row("even", "Aantal meldingen ziekenhuisopnames op Intensive Care (bron: NICE)", "287", "192")}
        ${row("odd", "Overleden", "185", "150")}
        ${row("gap", "", "", "")}
        ${row(
          "odd strong",
          html`<abbr title="Gemeentelijke Gezondheidsdienst">GGD</abbr> testlocaties per kalenderweek<sup>3</sup>`,
          "week 42",
          "week 41",
        )}
        ${row("even", "Totaal aantal afgenomen testen waarvan uitslag bekend is", "269.753", "278.477")}
        ${row("odd", "Aantal positieve testen", "38.859", "37.914")}
        ${row("even", "Percentage positieve testen", "14,4%", "13,6%")}
      </tbody>
    </table>`;
  }
}
